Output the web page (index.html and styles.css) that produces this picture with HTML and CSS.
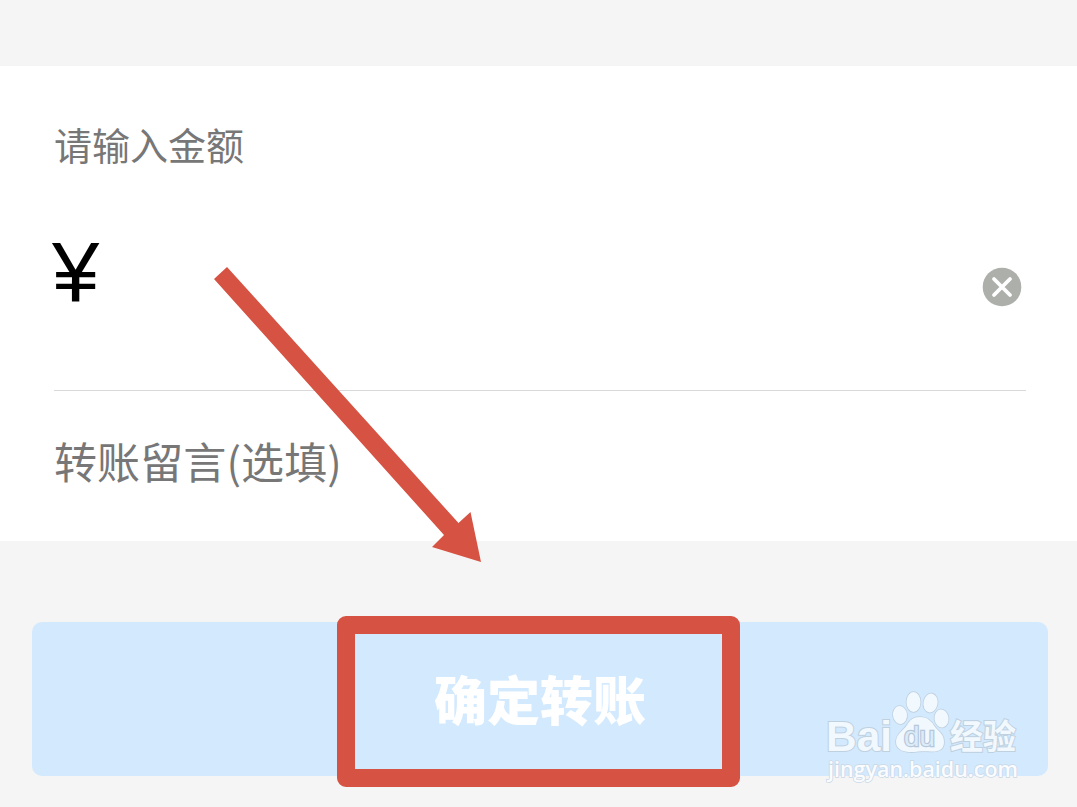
FILE: index.html
```html
<!DOCTYPE html>
<html lang="zh-CN">
<head>
    <meta charset="UTF-8">
    <meta name="viewport" content="width=device-width, initial-scale=1.0">
    <title>转账</title>
    <link rel="stylesheet" href="styles.css">
</head>
<body>

    <main class="page">
        <section class="card">
            <div class="amount-label">请输入金额</div>
            <div class="amount-row">
                <span class="currency">¥</span>
                <svg class="clear-btn" viewBox="0 0 40 40">
                    <circle cx="20" cy="20" r="19.3" fill="#adafaa"/>
                    <path d="M12 12 L28 28 M28 12 L12 28" stroke="#fff" stroke-width="3.8" stroke-linecap="round"/>
                </svg>
            </div>
            <div class="message">转账留言(选填)</div>
        </section>

        <div class="submit-btn">确定转账</div>
    </main>

    <!-- 标注 -->
    <svg class="arrow" viewBox="0 0 270 298">
        <path d="M14 2 L245.500 258 L257.500 247 L268 297 L219 282 L231 270 L1 14 Z" fill="#d65242"/>
    </svg>
    <div class="highlight"></div>

    <svg class="watermark" viewBox="0 0 200 100">
        <g class="wm-shape">
            <text class="wm-bai" x="3" y="66" textLength="66" lengthAdjust="spacingAndGlyphs">Bai</text>
            <ellipse cx="77" cy="30" rx="7" ry="9" transform="rotate(-8 77 30)"/>
            <ellipse cx="90.500" cy="17" rx="7" ry="10"/>
            <ellipse cx="107.500" cy="18" rx="7" ry="9.500" transform="rotate(10 107.500 18)"/>
            <ellipse cx="118.500" cy="33.500" rx="7" ry="9" transform="rotate(-8 118.500 33.500)"/>
            <path d="M97 32 C105 32 109 37 112 42 C116 47 121 49 121 57 C121 65 115 67 108 66.500 C103 66 100 66 95 66.500 C86 68 73 67 73 57 C73 49 80 46 84 40 C87 35 90 32 97 32 Z"/>
            <text class="wm-du" x="81" y="61" textLength="31" lengthAdjust="spacingAndGlyphs">du</text>
            <text class="wm-cn" x="127" y="64" textLength="66" lengthAdjust="spacingAndGlyphs">经验</text>
            <text class="wm-url" x="5" y="92" textLength="190" lengthAdjust="spacingAndGlyphs">jingyan.baidu.com</text>
        </g>
    </svg>

</body>
</html>
```

FILE: styles.css
```css
body {
    margin: 0;
    background-color: #f5f5f5;
    font-family: "Noto Sans CJK SC", sans-serif;
    overflow: hidden;
}
.page {
    box-sizing: border-box;
    height: 807px;
    padding-top: 66px;
}
.card {
    box-sizing: border-box;
    height: 475px;
    padding: 50px 51px 0 54px;
    background-color: #fff;
}
.amount-label {
    height: 56px;
    line-height: 56px;
    font-size: 38px;
    color: #777;
}
.amount-row {
    display: flex;
    justify-content: space-between;
    box-sizing: border-box;
    height: 219px;
    border-bottom: 1px solid #d9d9d9;
}
.currency {
    margin-left: -2px;
    margin-top: 51px;
    font-family: "Liberation Sans", sans-serif;
    font-size: 85px;
    line-height: 100px;
    color: #000;
}
.clear-btn {
    width: 40px;
    height: 40px;
    margin-top: 95px;
    margin-right: 4px;
}
.message {
    height: 138px;
    line-height: 138px;
    font-size: 43px;
    letter-spacing: 0.1px;
    color: #777;
}
.submit-btn {
    height: 154px;
    margin: 81px 29px 0 32px;
    border-radius: 10px;
    background-color: #d2e9fe;
    color: #fff;
    font-size: 53px;
    font-weight: 800;
    line-height: 152px;
    text-align: center;
}
.arrow {
    position: absolute;
    left: 213px;
    top: 265px;
    width: 270px;
    height: 298px;
}
.highlight {
    position: absolute;
    left: 337px;
    top: 616px;
    box-sizing: border-box;
    width: 403px;
    height: 171px;
    border: 18px solid #d65242;
    border-radius: 9px;
}
.watermark {
    position: absolute;
    left: 823px;
    top: 685px;
    width: 200px;
    height: 100px;
}
.wm-shape {
    fill: #f1f8fe;
    stroke: #bfd0df;
    stroke-width: 1.6px;
    paint-order: stroke;
}
.wm-bai {
    font-family: "Liberation Sans", sans-serif;
    font-size: 43px;
    font-weight: bold;
    stroke-width: 2px;
}
.wm-du {
    font-family: "Liberation Sans", sans-serif;
    font-size: 27px;
    fill: #dcebf8;
    stroke: #b5c7d8;
    stroke-width: 2.4px;
}
.wm-cn {
    font-size: 34px;
    font-weight: bold;
    stroke-width: 2px;
}
.wm-url {
    font-family: "Open Sans", sans-serif;
    font-size: 21px;
    font-weight: 600;
    fill: #fafcff;
    stroke: #c9d8e5;
    stroke-width: 1.4px;
}
```
